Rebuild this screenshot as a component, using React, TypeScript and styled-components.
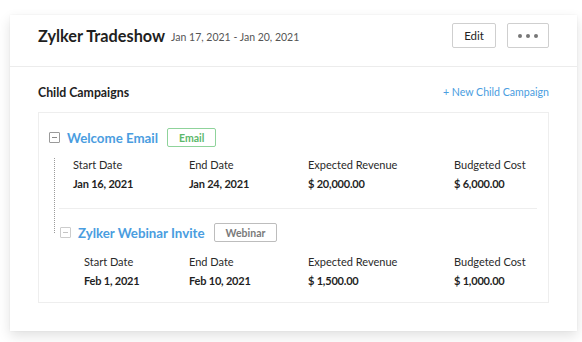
import React from 'react';
import styled, { createGlobalStyle } from 'styled-components';

const GlobalStyle = createGlobalStyle`
  body {
    margin: 0;
    background: #ffffff;
    font-family: Lato, "Open Sans", sans-serif;
    color: #222;
  }
`;

const Page = styled.div`
  padding: 15px 5px 11px 10px;
`;

const Card = styled.div`
  width: 567px;
  background: #fff;
  box-shadow: 0 5px 12px rgba(0, 0, 0, 0.12), 0 0 2px rgba(0, 0, 0, 0.05);
`;

const Header = styled.div`
  display: flex;
  align-items: center;
  padding: 8px 28px 18px;
  border-bottom: 1px solid #ececec;
`;

const Title = styled.h2`
  margin: 0;
  font-size: 16.3px;
  font-weight: 700;
  color: #1f1f1f;
`;

const DateRange = styled.span`
  margin-left: 6px;
  margin-top: 3px;
  font-size: 10.5px;
  color: #555;
`;

const Actions = styled.div`
  margin-left: auto;
  display: flex;
  gap: 11px;
`;

const Button = styled.button<{ $w: number }>`
  width: ${({ $w }) => $w}px;
  height: 25px;
  background: #fff;
  border: 1px solid #cfcfcf;
  border-radius: 2px;
  font-family: inherit;
  font-size: 11.5px;
  color: #222;
  display: flex;
  align-items: center;
  justify-content: center;
  gap: 4px;
  padding: 0;
`;

const Dot = styled.span`
  width: 4px;
  height: 4px;
  border-radius: 50%;
  background: #777;
`;

const Body = styled.div`
  padding: 16px 28px 28px;
`;

const SectionHead = styled.div`
  display: flex;
  align-items: center;
  justify-content: space-between;
  height: 18px;
  margin-bottom: 11px;
`;

const SectionTitle = styled.span`
  font-size: 12.3px;
  font-weight: 700;
  color: #222;
`;

const AddLink = styled.a`
  font-size: 10.6px;
  color: #4a9de0;
  text-decoration: none;
`;

const Box = styled.div`
  border: 1px solid #eeeeee;
  padding: 15px 11px 14px 10px;
`;

const TitleRow = styled.div<{ $indent?: number }>`
  display: flex;
  align-items: center;
  height: 19px;
  padding-left: ${({ $indent }) => $indent ?? 0}px;
`;

const Toggle = styled.span<{ $light?: boolean }>`
  width: 9px;
  height: 9px;
  border: 1px solid ${({ $light }) => ($light ? '#cccccc' : '#9a9a9a')};
  border-radius: 1px;
  display: flex;
  align-items: center;
  justify-content: center;
  margin-right: 7px;

  &::after {
    content: '';
    width: 5px;
    height: 1px;
    background: ${({ $light }) => ($light ? '#c4c4c4' : '#8a8a8a')};
  }
`;

const CampaignName = styled.span`
  font-size: 13.3px;
  font-weight: 700;
  color: #4a9de0;
`;

const Badge = styled.span<{ $tone: 'green' | 'grey' }>`
  margin-left: 9px;
  height: 17px;
  padding: 0 11px;
  display: flex;
  align-items: center;
  font-size: 10.5px;
  font-weight: 700;
  border-radius: 2px;
  color: ${({ $tone }) => ($tone === 'green' ? '#5cb86a' : '#7a7a7a')};
  border: 1px solid ${({ $tone }) => ($tone === 'green' ? '#8fd39b' : '#bdbdbd')};
`;

const Tree = styled.div`
  position: relative;
  margin-left: 5px;

  &::before {
    content: '';
    position: absolute;
    left: 0;
    top: 1px;
    bottom: 9px;
    border-left: 1px dotted #9a9a9a;
  }
`;

const Fields = styled.div<{ $indent: number; $first: number; $top: number }>`
  display: grid;
  grid-template-columns: ${({ $first }) => $first}px 119px 146px 1fr;
  padding-left: ${({ $indent }) => $indent}px;
  margin-top: ${({ $top }) => $top}px;
  row-gap: 4px;
  font-size: 11px;
  line-height: 15px;
`;

const Label = styled.span`
  color: #2a2a2a;
`;

const Value = styled.span`
  font-weight: 700;
  color: #1f1f1f;
  letter-spacing: -0.2px;
`;

const Separator = styled.div`
  height: 1px;
  background: #eeeeee;
  margin: 17px 0 14px 5px;
`;

type Campaign = {
  name: string;
  type: string;
  tone: 'green' | 'grey';
  start: string;
  end: string;
  revenue: string;
  cost: string;
};

const campaigns: Campaign[] = [
  { name: 'Welcome Email', type: 'Email', tone: 'green', start: 'Jan 16, 2021', end: 'Jan 24, 2021', revenue: '$ 20,000.00', cost: '$ 6,000.00' },
  { name: 'Zylker Webinar Invite', type: 'Webinar', tone: 'grey', start: 'Feb 1, 2021', end: 'Feb 10, 2021', revenue: '$ 1,500.00', cost: '$ 1,000.00' },
];

const FieldGrid: React.FC<{ c: Campaign; indent: number; first: number; top: number }> = ({ c, indent, first, top }) => (
  <Fields $indent={indent} $first={first} $top={top}>
    <Label>Start Date</Label>
    <Label>End Date</Label>
    <Label>Expected Revenue</Label>
    <Label>Budgeted Cost</Label>
    <Value>{c.start}</Value>
    <Value>{c.end}</Value>
    <Value>{c.revenue}</Value>
    <Value>{c.cost}</Value>
  </Fields>
);

const App: React.FC = () => {
  const [parent, child] = campaigns;
  return (
    <>
      <GlobalStyle />
      <Page>
        <Card>
          <Header>
            <Title>Zylker Tradeshow</Title>
            <DateRange>Jan 17, 2021 - Jan 20, 2021</DateRange>
            <Actions>
              <Button $w={44}>Edit</Button>
              <Button $w={42}>
                <Dot />
                <Dot />
                <Dot />
              </Button>
            </Actions>
          </Header>
          <Body>
            <SectionHead>
              <SectionTitle>Child Campaigns</SectionTitle>
              <AddLink href="#">+ New Child Campaign</AddLink>
            </SectionHead>
            <Box>
              <TitleRow>
                <Toggle />
                <CampaignName>{parent.name}</CampaignName>
                <Badge $tone={parent.tone}>{parent.type}</Badge>
              </TitleRow>
              <Tree>
                <FieldGrid c={parent} indent={19} first={116} top={10} />
                <Separator />
                <TitleRow $indent={6}>
                  <Toggle $light />
                  <CampaignName>{child.name}</CampaignName>
                  <Badge $tone={child.tone}>{child.type}</Badge>
                </TitleRow>
              </Tree>
              <FieldGrid c={child} indent={35} first={105} top={12} />
            </Box>
          </Body>
        </Card>
      </Page>
    </>
  );
};

export default App;
